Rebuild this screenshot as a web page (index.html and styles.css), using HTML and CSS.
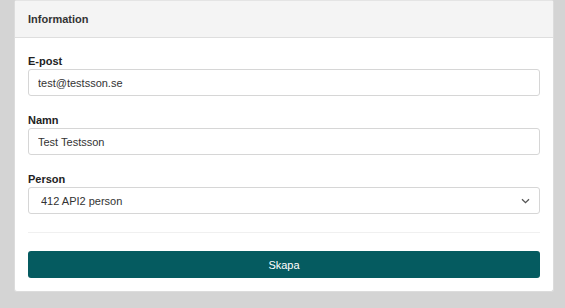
FILE: index.html
```html
<!DOCTYPE html>
<html lang="sv">
<head>
    <meta charset="UTF-8">
    <meta name="viewport" content="width=device-width, initial-scale=1.0">
    <title>Information</title>
    <link rel="stylesheet" href="styles.css">
</head>
<body>
    <div class="card">
        <div class="card-header">Information</div>
        <form class="card-body" onsubmit="return false">
            <div class="field">
                <label for="email">E-post</label>
                <input type="text" id="email" value="test@testsson.se">
            </div>
            <div class="field">
                <label for="name">Namn</label>
                <input type="text" id="name" value="Test Testsson">
            </div>
            <div class="field">
                <label for="person">Person</label>
                <div class="select-wrap">
                    <select id="person">
                        <option>412 API2 person</option>
                    </select>
                    <svg class="chevron" width="9" height="6" viewBox="0 0 9 6">
                        <path d="M1 1.2l3.5 3.5 3.5-3.5" fill="none" stroke="#555" stroke-width="1.3"/>
                    </svg>
                </div>
            </div>
            <hr>
            <button type="submit">Skapa</button>
        </form>
    </div>
</body>
</html>
```

FILE: styles.css
```css
* {
    margin: 0;
    padding: 0;
    box-sizing: border-box;
}
body {
    font-family: 'Liberation Sans', Arial, sans-serif;
    font-size: 11px;
    color: #222;
    background: #d4d4d4;
    padding: 0 11px 16px 14px;
}
.card {
    background: #fff;
    border: 1px solid #dcdcdc;
    border-top-color: #e4e4e4;
    border-radius: 3px;
}
.card-header {
    height: 37px;
    line-height: 36px;
    padding: 0 13px;
    background: #f4f4f4;
    border-bottom: 1px solid #dedede;
    font-weight: bold;
    color: #333;
}
.card-body {
    padding: 16px 13px 13px;
}
.field {
    margin-bottom: 17px;
}
.field label {
    display: block;
    font-weight: bold;
    line-height: 15px;
    color: #222;
}
.field input,
.field select {
    width: 100%;
    height: 27px;
    border: 1px solid #d6d6d6;
    border-radius: 3px;
    padding: 0 9px;
    font-family: inherit;
    font-size: 11px;
    color: #333;
    background: #fff;
    outline: none;
}
.select-wrap {
    position: relative;
}
.field select {
    appearance: none;
    padding-left: 12px;
}
.chevron {
    position: absolute;
    right: 10px;
    top: 11px;
    pointer-events: none;
}
hr {
    border: none;
    border-top: 1px solid #f0f0f0;
    margin: 18px 0 18px;
}
button {
    width: 100%;
    height: 27px;
    border: none;
    border-radius: 3px;
    background: #055b60;
    color: #fff;
    font-family: inherit;
    font-size: 11px;
    cursor: pointer;
}
```
